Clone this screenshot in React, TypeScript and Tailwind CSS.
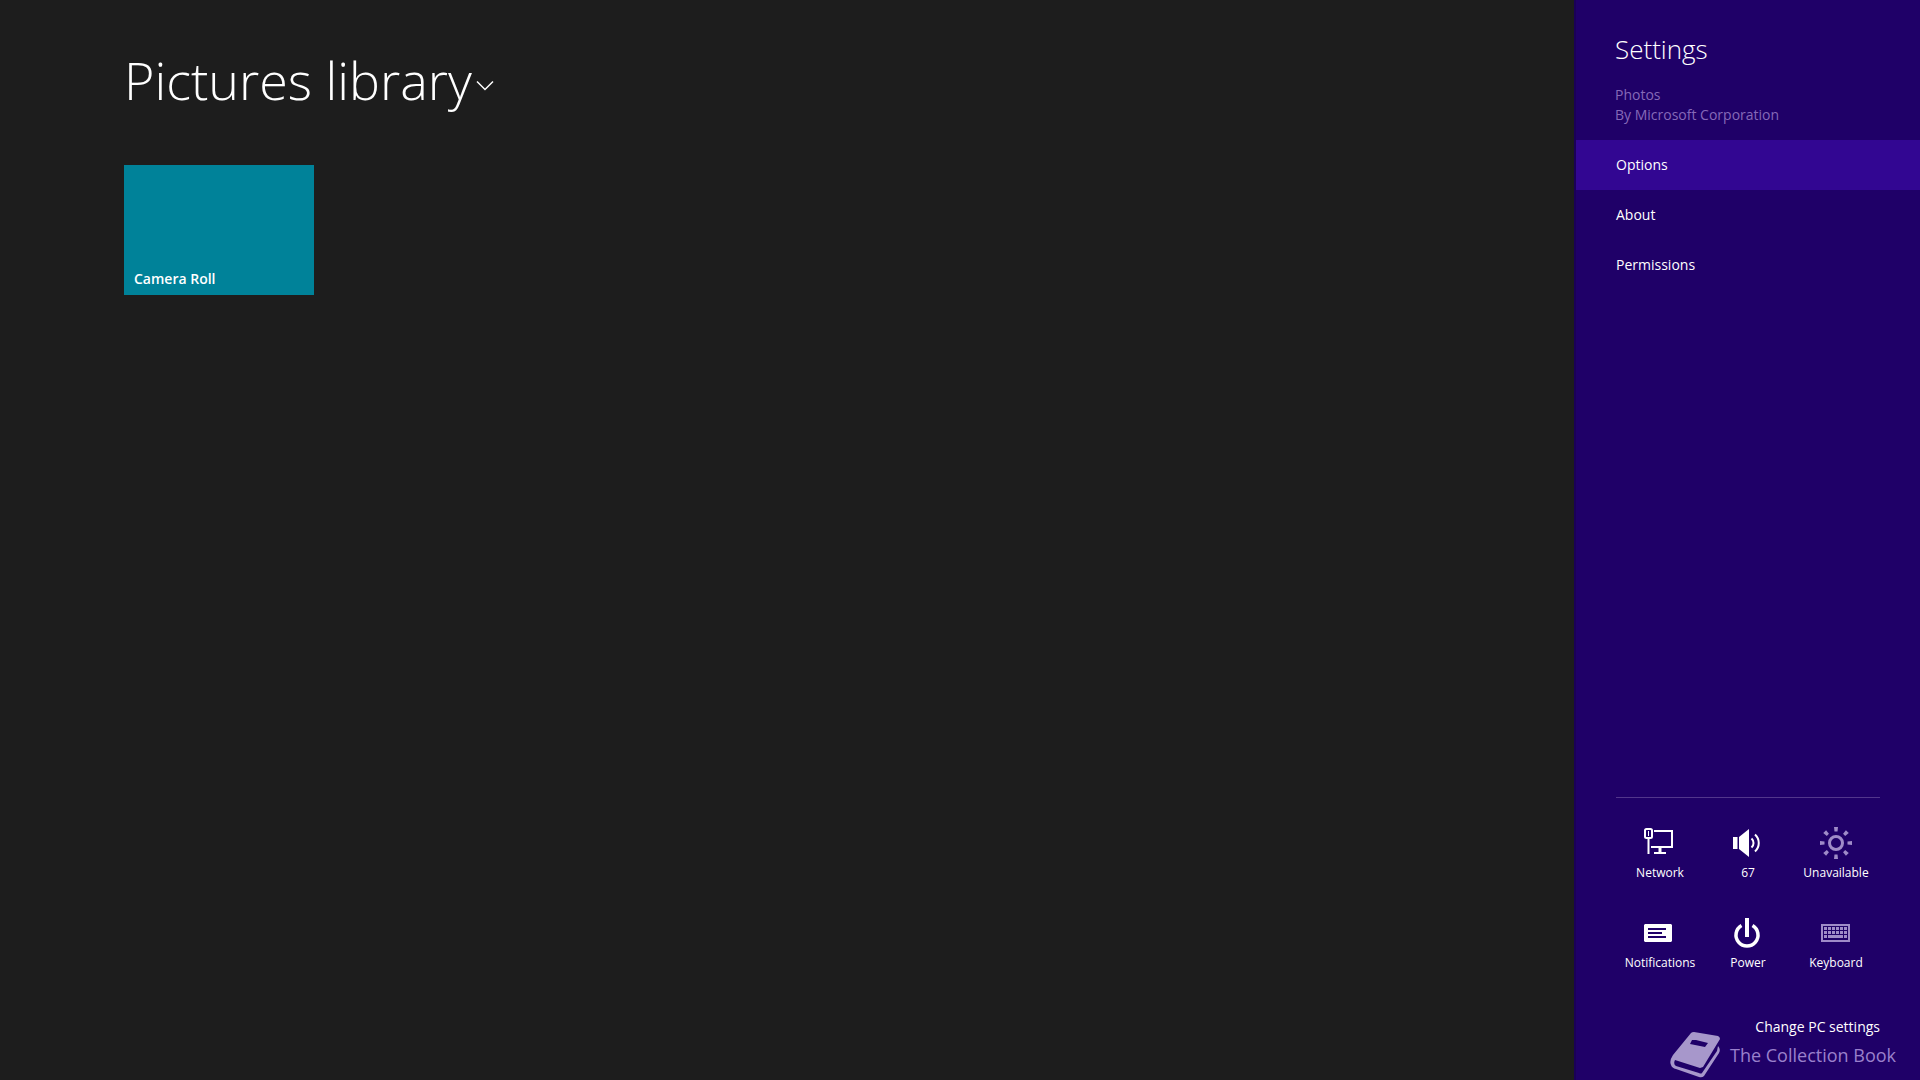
import { clsx } from "clsx";

const MENU = ["Options", "About", "Permissions"];

function NetworkIcon() {
  return (
    <svg viewBox="0 0 32 32" className="size-8" fill="none" stroke="currentColor" strokeWidth="2" aria-hidden="true">
      <path d="M10 4h18v16H7" />
      <path d="M16 20v5" strokeWidth="3" />
      <path d="M10 26h12" />
      <path d="M4.500 11v16" />
      <rect x="1" y="2" width="7" height="9" rx="1.500" />
      <path d="M4.500 4v5" strokeWidth="1" />
    </svg>
  );
}

function VolumeIcon() {
  return (
    <svg viewBox="0 0 32 32" className="size-8" fill="none" stroke="currentColor" strokeWidth="2" aria-hidden="true">
      <path d="M1 10h4.500v12H1z" fill="currentColor" stroke="none" />
      <path d="M7 10l10-8v28l-10-8z" fill="currentColor" stroke="none" />
      <path d="M19.500 11.500a6 6 0 0 1 0 9" />
      <path d="M23 7.500a11.500 11.500 0 0 1 0 17" />
    </svg>
  );
}

function BrightnessIcon() {
  return (
    <svg viewBox="0 0 32 32" className="size-8" fill="none" stroke="currentColor" strokeWidth="3" aria-hidden="true">
      <circle cx="16" cy="16" r="6.500" />
      {[0, 45, 90, 135, 180, 225, 270, 315].map((angle) => (
        <path key={angle} d="M14 0h4l-.5 4.500h-3z" fill="currentColor" stroke="none" transform={`rotate(${angle} 16 16)`} />
      ))}
    </svg>
  );
}

function NotificationsIcon() {
  return (
    <svg viewBox="0 0 32 32" className="size-8" aria-hidden="true">
      <path
        fill="currentColor"
        fillRule="evenodd"
        d="M1 7h26l1 1v16l-1 1H1l-1-1V8zM4 11v2h18v-2zM4 15v2h14v-2zM4 19v2h18v-2z"
      />
    </svg>
  );
}

function PowerIcon() {
  return (
    <svg viewBox="0 0 32 32" className="size-8" fill="none" stroke="currentColor" strokeWidth="4" aria-hidden="true">
      <path d="M15 1v19" />
      <path d="M9.500 8.500a11 11 0 1 0 11 0" strokeWidth="3.500" />
    </svg>
  );
}

function KeyboardIcon() {
  return (
    <svg viewBox="0 0 32 32" className="size-8" fill="currentColor" aria-hidden="true">
      <path fillRule="evenodd" d="M1 7h29v18H1zM3 9v14h25V9z" />
      {[4, 8, 12, 16, 20, 24].map((x) => (
        <path key={x} d={`M${x} 10h3v3h-3zM${x} 14h3v3h-3z`} />
      ))}
      <path d="M4 18h3v3H4zM8 18h15v3H8zM24 18h3v3h-3z" />
    </svg>
  );
}

const TILES = [
  { label: "Network", icon: NetworkIcon },
  { label: "67", icon: VolumeIcon },
  { label: "Unavailable", icon: BrightnessIcon, dim: true },
  { label: "Notifications", icon: NotificationsIcon },
  { label: "Power", icon: PowerIcon },
  { label: "Keyboard", icon: KeyboardIcon, dim: true },
];

function Library() {
  return (
    <main className="flex-1 px-31 pt-11">
      <h1 className="text-[52px] leading-[72px] font-light">
        <button className="flex items-center gap-1">
          Pictures library
          <svg viewBox="0 0 18 12" className="mt-3 h-3 w-[18px]" fill="none" stroke="currentColor" strokeWidth="1.500" aria-hidden="true">
            <path d="M1 1.500l8 8 8-8" />
          </svg>
        </button>
      </h1>
      <button className="mt-[49px] flex h-[130px] w-[190px] items-end bg-[#008299] px-[10px] pb-1 text-sm leading-6 font-semibold">
        Camera Roll
      </button>
    </main>
  );
}

function SettingsPanel() {
  return (
    <aside className="flex w-[346px] flex-col border-l-2 border-[#1a0058] bg-[#1f0068]">
      <header className="px-[39px] pt-[31px]">
        <h2 className="text-[26px] leading-9 font-light">Settings</h2>
        <p className="mt-[18px] text-sm leading-5 text-[#8669b8]">
          Photos
          <br />
          By Microsoft Corporation
        </p>
      </header>
      <nav className="mt-[15px] flex flex-col">
        {MENU.map((item) => (
          <button key={item} className={clsx("h-[50px] px-10 text-left text-sm", item === "Options" && "bg-[#320692]")}>
            {item}
          </button>
        ))}
      </nav>
      <footer className="mx-10 mt-auto flex flex-col border-t border-[#52368c] pb-[41px]">
        <div className="mt-[29px] grid grid-cols-3 gap-y-[33px]">
          {TILES.map(({ label, icon: Icon, dim }) => (
            <button key={label} className="flex flex-col items-center gap-[3px] text-xs leading-[22px]">
              <span className={clsx(dim && "text-[#9f8bc8]")}>
                <Icon />
              </span>
              {label}
            </button>
          ))}
        </div>
        <a href="#pc-settings" className="mt-[41px] self-end text-sm leading-6">
          Change PC settings
        </a>
      </footer>
    </aside>
  );
}

function Watermark() {
  return (
    <div className="pointer-events-none absolute right-6 bottom-px flex items-center gap-[10px] text-[#9a80cc]">
      <svg viewBox="0 0 50 48" className="h-12 w-[50px]" fill="#a797cb" aria-hidden="true">
        <path
          fillRule="evenodd"
          d="M24 1q-2 0-3 1L3 24q-4 6-2 10 1 3 5 4l23 8q3 1 5-1l15-23q2-4-1-7l-1 5-15 22q-1 1-3 0L6 35q-3-2-1-6l25 8 3-1L50 8q0-2-2-3zM22 9h4l12 3-3 4-15-3z"
        />
      </svg>
      <span className="text-[18px] leading-6">The Collection Book</span>
    </div>
  );
}

export default function App() {
  return (
    <div className="relative flex min-h-screen overflow-hidden bg-[#1d1d1d] font-['Open_Sans','Noto_Sans',sans-serif] text-white">
      <Library />
      <SettingsPanel />
      <Watermark />
    </div>
  );
}
